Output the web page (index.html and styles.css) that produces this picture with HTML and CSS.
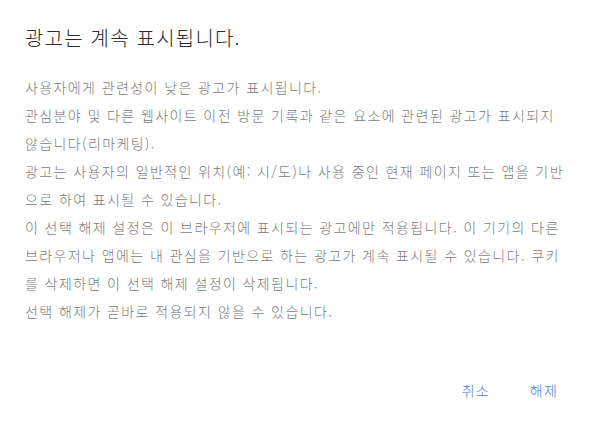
FILE: index.html
```html
<!DOCTYPE html>
<html lang="ko">
<head>
<meta charset="utf-8">
<link rel="stylesheet" href="styles.css">
</head>
<body>
<div class="dialog">
  <h1 class="title">광고는 계속 표시됩니다.</h1>
  <div class="content">
    <p>사용자에게 관련성이 낮은 광고가 표시됩니다.</p>
    <p>관심분야 및 다른 웹사이트 이전 방문 기록과 같은 요소에 관련된 광고가 표시되지<br>않습니다(리마케팅).</p>
    <p>광고는 사용자의 일반적인 위치(예: 시/도)나 사용 중인 현재 페이지 또는 앱을 기반<br>으로 하여 표시될 수 있습니다.</p>
    <p>이 선택 해제 설정은 이 브라우저에 표시되는 광고에만 적용됩니다. 이 기기의 다른<br>브라우저나 앱에는 내 관심을 기반으로 하는 광고가 계속 표시될 수 있습니다. 쿠키<br>를 삭제하면 이 선택 해제 설정이 삭제됩니다.</p>
    <p>선택 해제가 곧바로 적용되지 않을 수 있습니다.</p>
  </div>
  <div class="actions">
    <button class="btn">취소</button>
    <button class="btn">해제</button>
  </div>
</div>
</body>
</html>
```
FILE: styles.css
```css
html, body {
  margin: 0;
  padding: 0;
  background: #ffffff;
}
body {
  font-family: "Noto Sans CJK KR", "Noto Sans", sans-serif;
  width: 599px;
  height: 431px;
  overflow: hidden;
}
.dialog {
  box-sizing: border-box;
  height: 431px;
  padding: 24px 25px 0 25px;
  display: flex;
  flex-direction: column;
}
.title {
  margin: 0;
  font-size: 20px;
  font-weight: 300;
  line-height: 28px;
  letter-spacing: 1.2px;
  color: #2a2a2a;
}
.content {
  margin-top: 21px;
  font-size: 14px;
  font-weight: 300;
  line-height: 28px;
  letter-spacing: 1.4px;
  color: #7c7c7c;
  white-space: nowrap;
}
.content p {
  margin: 0;
}
.actions {
  margin-top: 50px;
  display: flex;
  justify-content: flex-end;
  gap: 12px;
  padding-right: 2px;
}
.btn {
  background: none;
  border: none;
  padding: 0 14px;
  height: 30px;
  font-family: inherit;
  font-size: 14px;
  font-weight: 300;
  letter-spacing: 1.2px;
  color: #4a84e0;
  cursor: pointer;
}
```
